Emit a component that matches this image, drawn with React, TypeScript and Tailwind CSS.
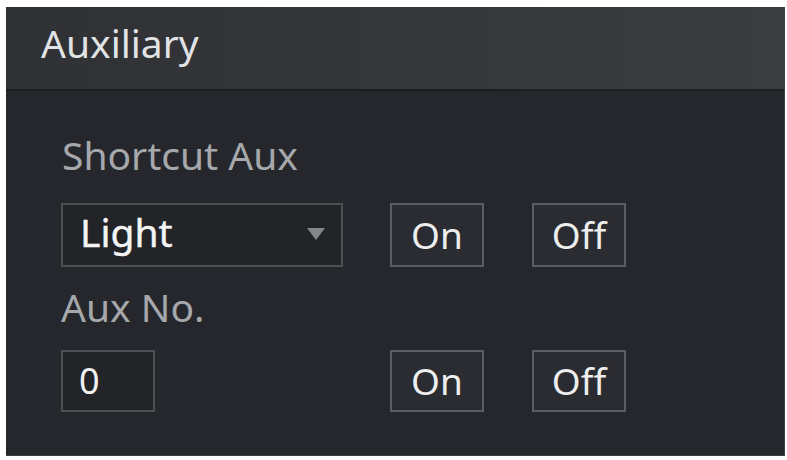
import React from "react";

const font = { fontFamily: '"Noto Sans", "Open Sans", sans-serif' };

function Btn({ label }: { label: string }) {
  return (
    <div className="w-[94px] h-full flex items-center justify-center border-2 border-[#5a5d62] bg-[#2a2c31] text-[#eeeeee] text-[37px] leading-[52px]">
      {label}
    </div>
  );
}

export default function App() {
  return (
    <div className="w-[787px] h-[460px] bg-white pt-[7px] pl-[6px]" style={font}>
      <div className="w-[779px] h-[449px] bg-[#25272c] flex flex-col border-r border-b border-[#3c3e42]">
        {/* header */}
        <div className="h-[84px] shrink-0 bg-gradient-to-r from-[#2f3135] to-[#3a3c40] border-b-2 border-[#1c1e21] pl-[35px] pt-[10px]">
          <span className="text-[39px] leading-[52px] text-[#e2e3e5]">Auxiliary</span>
        </div>

        {/* body */}
        <div className="flex flex-col pl-[55px] pt-[38px]">
          <div className="text-[39px] leading-[52px] text-[#a6a8ab] pl-[1px]">Shortcut Aux</div>

          <div className="flex items-stretch h-[64px] mt-[22px]">
            <div className="w-[282px] h-full border-2 border-[#4c4f54] bg-[#222428] flex items-center justify-between pl-[17px] pr-[16px]">
              <span className="text-[39px] leading-[52px] text-[#f4f4f4] -mt-[6px] [-webkit-text-stroke:0.4px_#f4f4f4]">Light</span>
              <svg width="18" height="12" viewBox="0 0 18 12" className="mt-[-2px]">
                <path d="M0 0 L18 0 L9 12 Z" fill="#85878d" />
              </svg>
            </div>
            <div className="ml-[47px] h-full">
              <Btn label="On" />
            </div>
            <div className="ml-[48px] h-full">
              <Btn label="Off" />
            </div>
          </div>

          <div className="text-[39px] leading-[52px] text-[#a6a8ab] mt-[14px]">Aux No.</div>

          <div className="flex items-stretch h-[62px] mt-[17px]">
            <div className="w-[94px] h-full border-2 border-[#4c4f54] bg-[#222428] flex items-center pl-[16px]">
              <span className="text-[36px] leading-[52px] text-[#f2f2f2]">0</span>
            </div>
            <div className="ml-[235px] h-full">
              <Btn label="On" />
            </div>
            <div className="ml-[48px] h-full">
              <Btn label="Off" />
            </div>
          </div>
        </div>
      </div>
    </div>
  );
}
